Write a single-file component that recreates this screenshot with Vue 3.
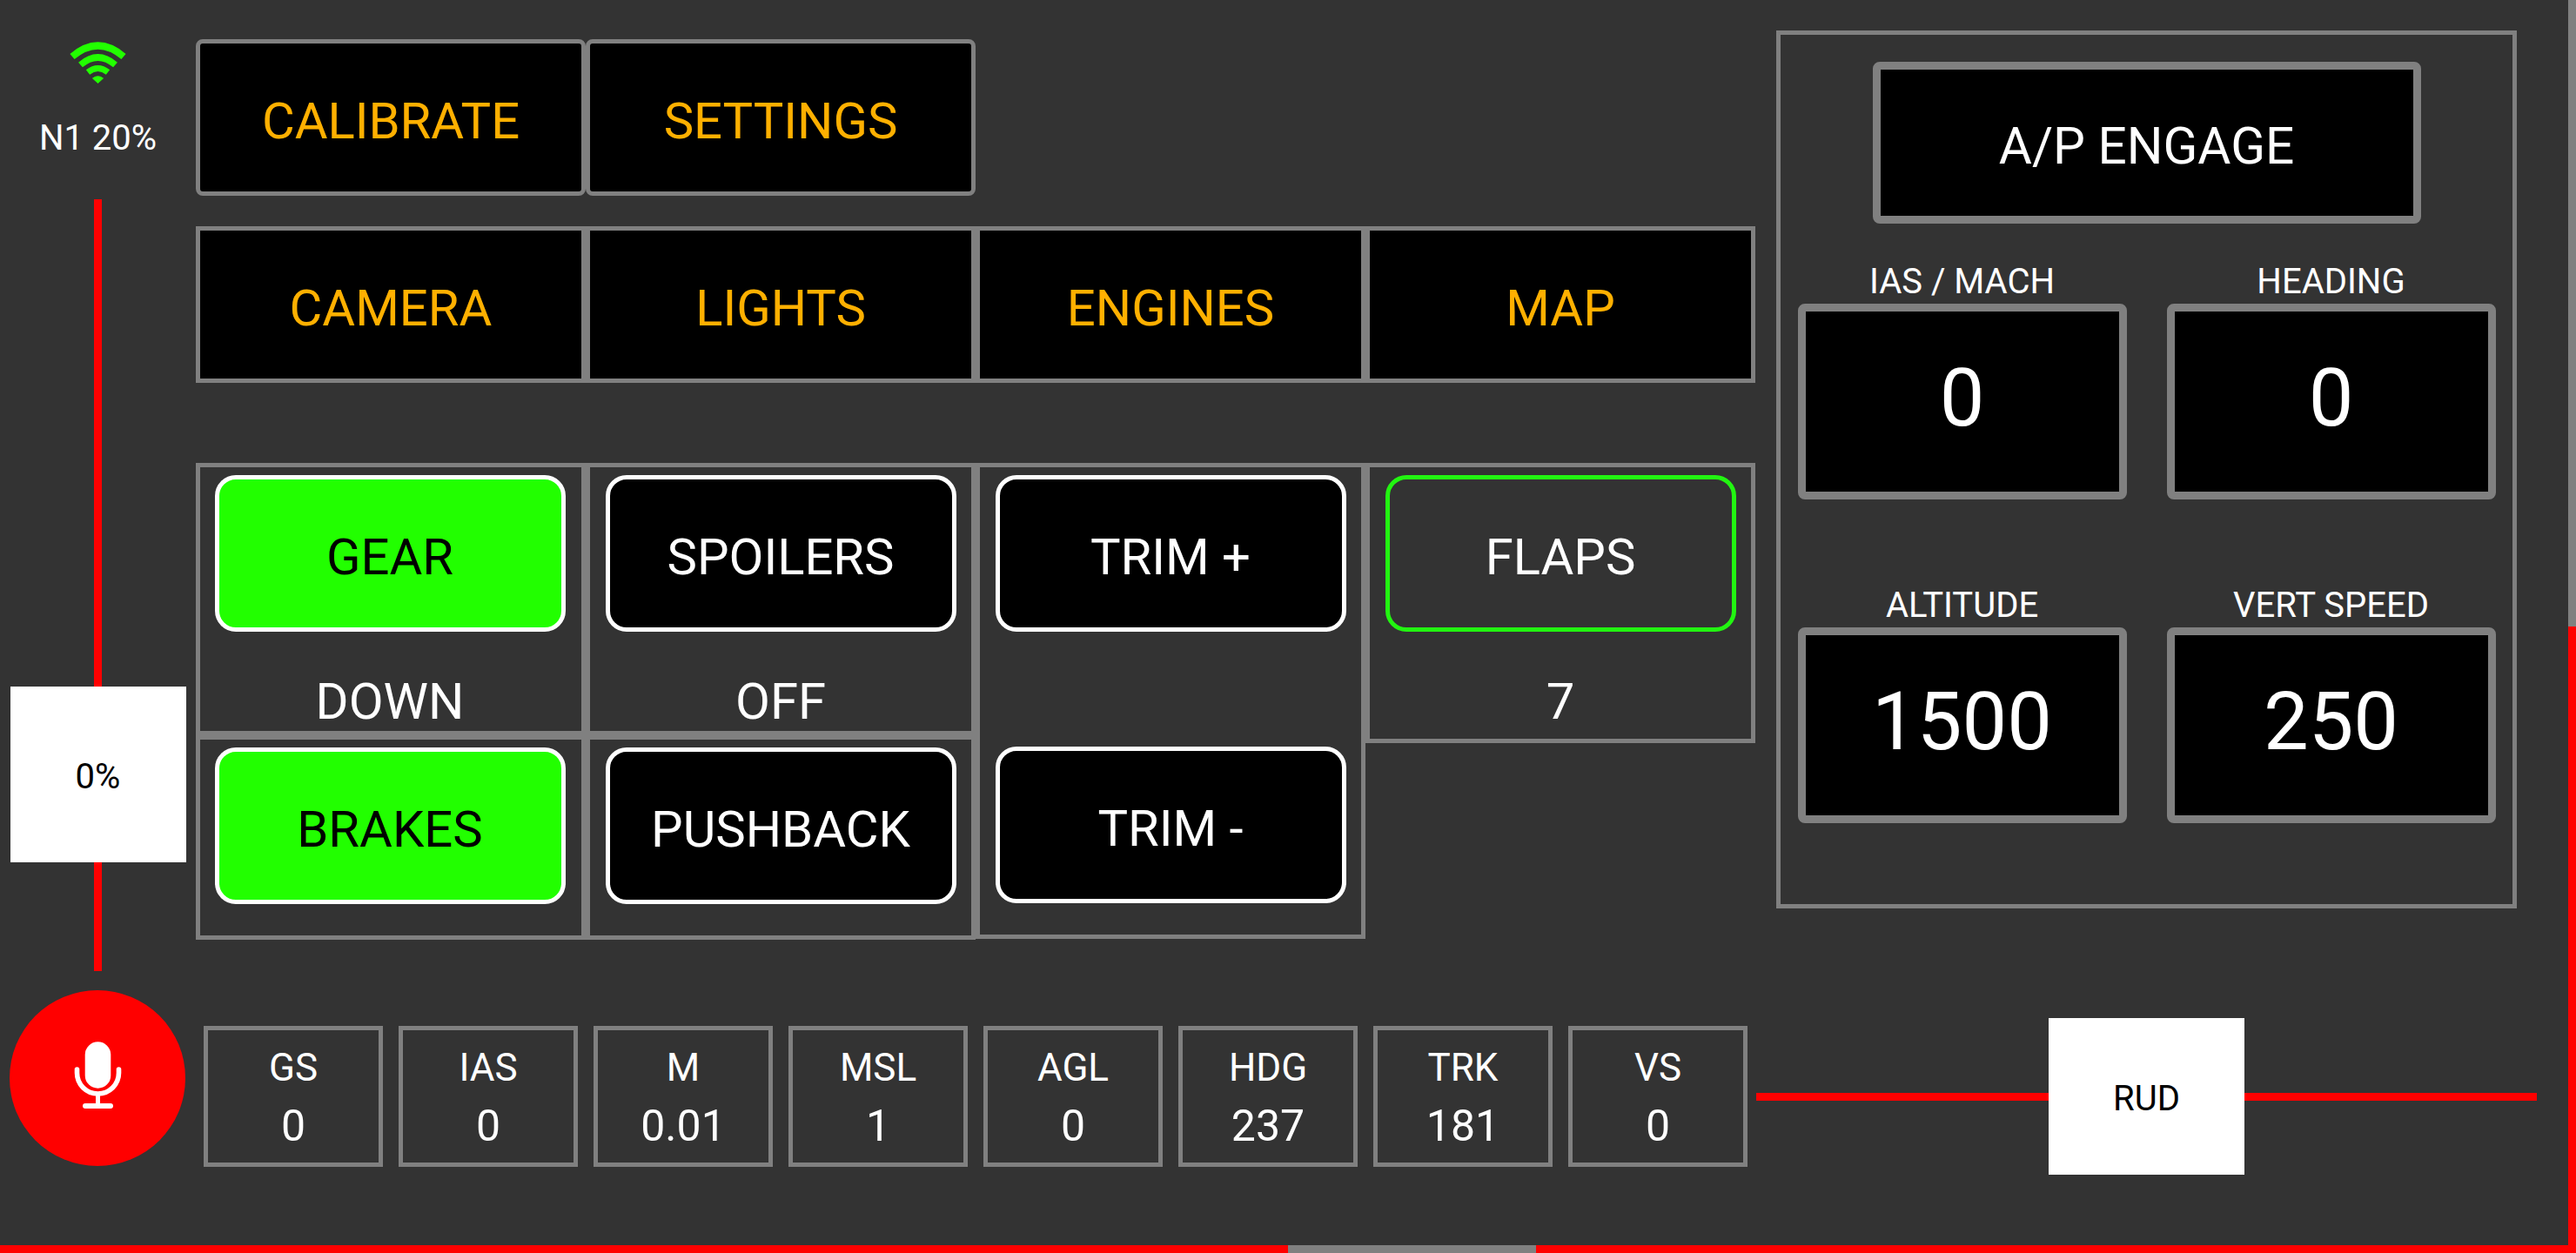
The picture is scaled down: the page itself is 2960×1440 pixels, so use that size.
<script setup>
const navRow = ['CAMERA', 'LIGHTS', 'ENGINES', 'MAP']
const autopilot = [
  { label: 'IAS / MACH', value: '0' },
  { label: 'HEADING', value: '0' },
  { label: 'ALTITUDE', value: '1500' },
  { label: 'VERT SPEED', value: '250' },
]
const stats = [
  { label: 'GS', value: '0' },
  { label: 'IAS', value: '0' },
  { label: 'M', value: '0.01' },
  { label: 'MSL', value: '1' },
  { label: 'AGL', value: '0' },
  { label: 'HDG', value: '237' },
  { label: 'TRK', value: '181' },
  { label: 'VS', value: '0' },
]
</script>

<template>
  <div class="screen">
    <div class="middle">
      <div class="content">
        <div class="upper">
          <aside class="rail">
            <svg class="wifi" viewBox="0 0 85 65" width="85" height="65" aria-hidden="true">
              <g fill="none" stroke="#22ff00">
                <path d="M13 25Q42.5 0 72 25" stroke-width="8" />
                <path d="M22.5 34.5Q42.5 17.5 62.5 34.5" stroke-width="7.5" />
                <path d="M31 43Q42.5 34 54 43" stroke-width="7" />
              </g>
              <path d="M42.5 55.5L36.5 50Q42.5 45.5 48.5 50Z" fill="#22ff00" stroke="#22ff00" stroke-linejoin="round" />
            </svg>
            <div class="n1">N1 20%</div>
            <div class="throttle">
              <span class="line line-top" />
              <div class="thumb thumb-throttle">0%</div>
              <span class="line" />
            </div>
          </aside>

          <main class="panels">
            <div class="btn-row">
              <button class="nav-btn rounded">CALIBRATE</button>
              <button class="nav-btn rounded">SETTINGS</button>
            </div>
            <div class="btn-row second">
              <button v-for="name in navRow" :key="name" class="nav-btn">{{ name }}</button>
            </div>

            <div class="controls">
              <div class="cell cell-first">
                <button class="ctl on">GEAR</button>
                <div class="state">DOWN</div>
              </div>
              <div class="cell">
                <button class="ctl">SPOILERS</button>
                <div class="state">OFF</div>
              </div>
              <div class="cell cell-trim">
                <button class="ctl">TRIM +</button>
                <button class="ctl">TRIM -</button>
              </div>
              <div class="cell cell-flaps">
                <button class="ctl flaps">FLAPS</button>
                <div class="state">7</div>
              </div>
              <div class="cell cell-first cell-bottom">
                <button class="ctl on">BRAKES</button>
              </div>
              <div class="cell cell-bottom">
                <button class="ctl">PUSHBACK</button>
              </div>
            </div>
          </main>

          <section class="autopilot">
            <button class="ap-btn">A/P ENGAGE</button>
            <div class="ap-grid">
              <div v-for="item in autopilot" :key="item.label" class="ap-field">
                <div class="ap-label">{{ item.label }}</div>
                <div class="ap-box">{{ item.value }}</div>
              </div>
            </div>
          </section>
        </div>

        <div class="lower">
          <button class="mic" aria-label="Microphone">
            <svg viewBox="0 0 85 100" width="85" height="100" aria-hidden="true">
              <rect x="27.7" y="8.3" width="29.6" height="53.4" rx="14.8" fill="#fff" />
              <path d="M18.5 40V44A24 24 0 0 0 66.5 44V40" fill="none" stroke="#fff" stroke-width="5.6" stroke-linecap="round" />
              <path d="M42.5 68V80" stroke="#fff" stroke-width="5" />
              <rect x="25" y="79" width="35" height="6" rx="3" fill="#fff" />
            </svg>
          </button>
          <div class="stats">
            <div v-for="stat in stats" :key="stat.label" class="stat">
              <div class="stat-label">{{ stat.label }}</div>
              <div class="stat-value">{{ stat.value }}</div>
            </div>
          </div>
          <div class="rudder">
            <span class="line" />
            <div class="thumb thumb-rudder">RUD</div>
            <span class="line" />
          </div>
        </div>
      </div>

      <div class="edge-right">
        <span class="edge-thumb" />
        <span class="edge-rest" />
      </div>
    </div>

    <div class="edge-bottom">
      <span class="edge-left" />
      <span class="edge-mid" />
      <span class="edge-rest" />
    </div>
  </div>
</template>

<style>
html,
body {
  margin: 0;
  background: #333;
}
</style>

<style scoped>
.screen {
  width: 2960px;
  height: 1440px;
  display: flex;
  flex-direction: column;
  background: #333;
  color: #fff;
  font-family: Roboto, 'Liberation Sans', sans-serif;
  overflow: hidden;
}

button {
  font-family: inherit;
  margin: 0;
  padding: 0;
  cursor: pointer;
  box-sizing: border-box;
}

.middle {
  flex: 1;
  display: flex;
  min-height: 0;
}

.content {
  flex: 1;
  min-width: 0;
  display: flex;
  flex-direction: column;
}

.edge-right {
  width: 9px;
  display: flex;
  flex-direction: column;
}

.edge-thumb {
  height: 720px;
  background: #808080;
}

.edge-rest {
  flex: 1;
  background: #f00;
}

.edge-bottom {
  height: 9px;
  display: flex;
}

.edge-left {
  width: 1480px;
  background: #f00;
}

.edge-mid {
  width: 285px;
  background: #808080;
}

.upper {
  height: 1138px;
  display: flex;
}

.rail {
  width: 225px;
  flex: none;
  display: flex;
  flex-direction: column;
  align-items: center;
  padding-top: 40px;
  box-sizing: border-box;
}

.wifi {
  display: block;
}

.n1 {
  font-size: 40px;
  line-height: 47px;
  margin-top: 30px;
  white-space: nowrap;
}

.throttle {
  height: 887px;
  margin-top: 47px;
  display: flex;
  flex-direction: column;
  align-items: center;
}

.throttle .line {
  width: 9px;
  flex: 1;
  background: #f00;
}

.throttle .line-top {
  flex: none;
  height: 560px;
}

.thumb {
  flex: none;
  background: #fff;
  color: #000;
  font-size: 40px;
  display: flex;
  align-items: center;
  justify-content: center;
  padding-top: 5px;
  box-sizing: border-box;
}

.thumb-throttle {
  width: 202px;
  height: 202px;
}

.thumb-rudder {
  width: 225px;
  height: 180px;
}

.panels {
  width: 1792px;
  flex: none;
  padding-top: 45px;
  box-sizing: border-box;
}

.btn-row {
  display: flex;
}

.btn-row.second {
  margin-top: 35px;
}

.nav-btn {
  width: 448px;
  height: 180px;
  background: #000;
  color: #ffb000;
  border: 5px solid #808080;
  font-size: 58px;
  padding-top: 7px;
}

.nav-btn.rounded {
  border-radius: 8px;
}

.controls {
  margin-top: 92px;
  display: grid;
  grid-template-columns: repeat(4, 448px);
  grid-template-rows: 313px 235px;
  align-items: start;
}

.cell {
  border: 5px solid #808080;
  box-sizing: border-box;
  display: flex;
  flex-direction: column;
  align-items: center;
  padding-top: 9px;
  height: 100%;
}

.cell-first {
  padding-right: 2px;
}

.cell-trim {
  grid-row: 1 / span 2;
  grid-column: 3;
  height: 547px;
  gap: 132px;
}

.cell-flaps {
  grid-column: 4;
  grid-row: 1;
  height: 322px;
}

.cell-bottom {
  grid-row: 2;
}

.ctl {
  width: 403px;
  height: 180px;
  flex: none;
  background: #000;
  color: #fff;
  border: 5px solid #fff;
  border-radius: 24px;
  font-size: 58px;
  padding-top: 7px;
}

.ctl.on {
  background: #22ff00;
  color: #000;
}

.ctl.flaps {
  background: #333;
  border-color: #22f511;
}

.state {
  font-size: 58px;
  line-height: 68px;
  margin-top: 46px;
}

.autopilot {
  width: 851px;
  height: 1009px;
  flex: none;
  margin: 35px 0 0 24px;
  border: 5px solid #808080;
  box-sizing: border-box;
  display: flex;
  flex-direction: column;
  align-items: center;
  padding-top: 31px;
}

.ap-btn {
  width: 630px;
  height: 186px;
  background: #000;
  color: #fff;
  border: 9px solid #808080;
  border-radius: 8px;
  font-size: 58.5px;
  padding-top: 7px;
}

.ap-grid {
  margin-top: 45px;
  display: grid;
  grid-template-columns: repeat(2, 378px);
  column-gap: 46px;
  row-gap: 100px;
}

.ap-label {
  font-size: 40px;
  line-height: 47px;
  text-align: center;
  margin-top: -2px;
  padding-bottom: 2px;
}

.ap-box {
  height: 225px;
  background: #000;
  border: 9px solid #808080;
  border-radius: 8px;
  box-sizing: border-box;
  font-size: 92px;
  padding-bottom: 8px;
  display: flex;
  align-items: center;
  justify-content: center;
}

.lower {
  flex: 1;
  display: flex;
  align-items: flex-start;
}

.mic {
  width: 202px;
  height: 202px;
  flex: none;
  margin-left: 11px;
  border: 0;
  border-radius: 50%;
  background: #f00;
  display: flex;
  align-items: center;
  justify-content: center;
}

.stats {
  margin: 41px 0 0 21px;
  display: flex;
  gap: 18px;
}

.stat {
  width: 206px;
  height: 162px;
  border: 5px solid #808080;
  box-sizing: border-box;
  display: flex;
  flex-direction: column;
  align-items: center;
  justify-content: center;
  padding-top: 5px;
}

.stat-label {
  font-size: 44px;
  line-height: 60px;
}

.stat-value {
  font-size: 50px;
  line-height: 68px;
  margin-top: 3px;
}

.rudder {
  width: 897px;
  margin: 32px 0 0 10px;
  display: flex;
  align-items: center;
}

.rudder .line {
  flex: 1;
  height: 9px;
  background: #f00;
}
</style>
